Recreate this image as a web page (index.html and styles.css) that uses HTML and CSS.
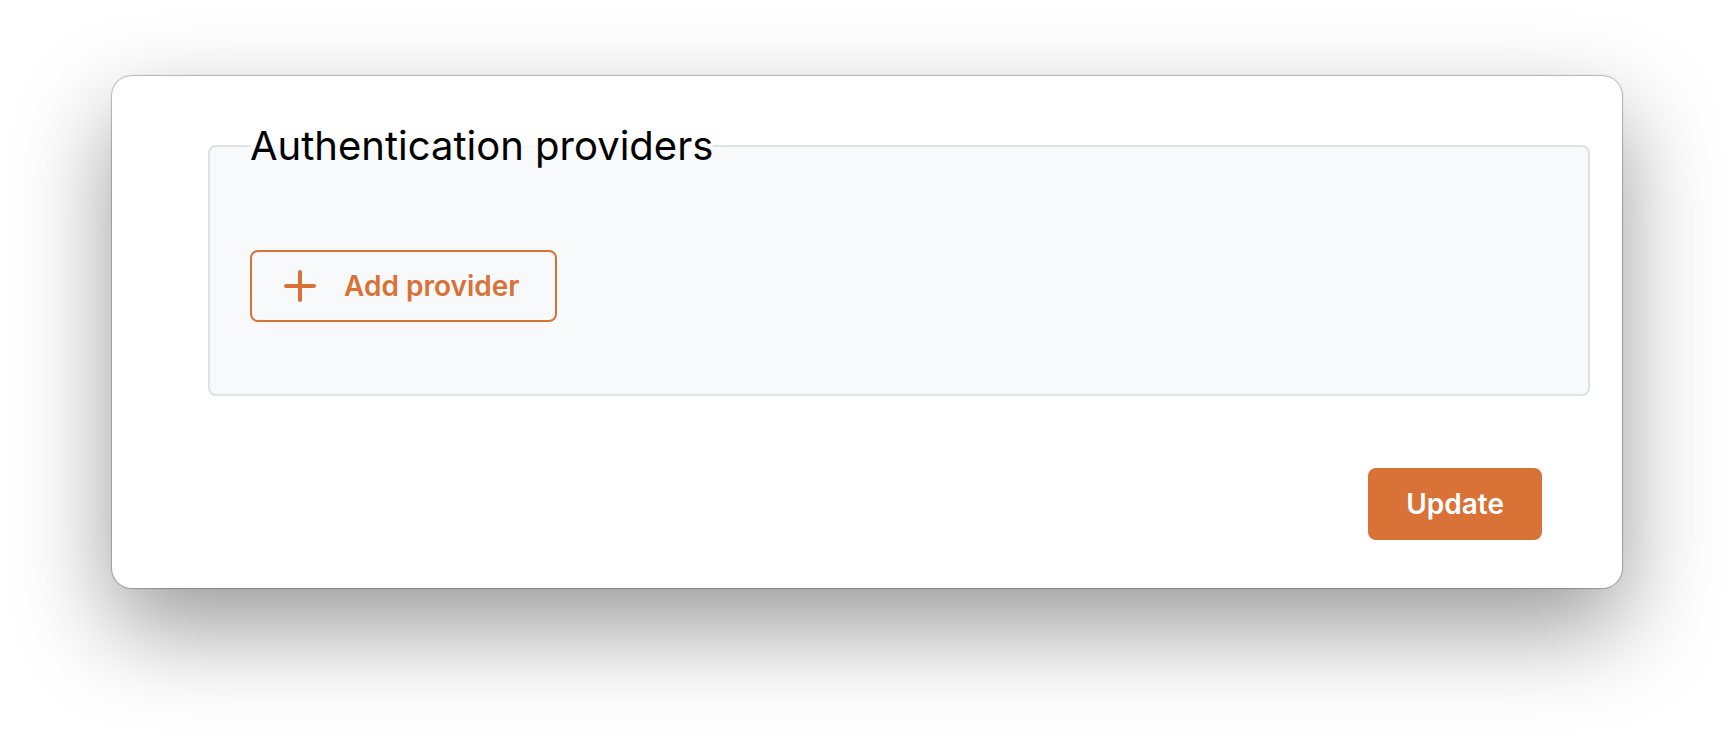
FILE: index.html
```
<!DOCTYPE html>
<html lang="en">
<head>
<meta charset="utf-8">
<title>Authentication providers</title>
<link rel="stylesheet" href="styles.css">
</head>
<body>
<main class="window">
  <form class="settings">
    <fieldset class="providers">
      <legend class="providers-title">Authentication providers</legend>
      <button class="button button-outline" type="button">
        <svg class="icon" viewBox="0 0 32 32" aria-hidden="true"><path d="M16 2v28M2 16h28"/></svg>
        Add provider
      </button>
    </fieldset>
    <div class="actions">
      <button class="button button-primary" type="submit">Update</button>
    </div>
  </form>
</main>
</body>
</html>
```
FILE: styles.css
```
* {
  box-sizing: border-box;
}

body {
  margin: 0;
  padding: 76px 112px 148px;
  background: #fff;
  font-family: Inter, sans-serif;
  color: #000;
}

.window {
  padding: 46px 32px 48px 96px;
  border-radius: 20px;
  background: #fff;
  box-shadow: 0 0 1px 1px rgba(0, 0, 0, 0.25), 0 40px 96px rgba(0, 0, 0, 0.4);
}

.providers {
  margin: 0;
  padding: 80px 40px 72px;
  border: 2px solid #dee2e6;
  border-radius: 8px;
  background: #f8f9fb;
}

.providers-title {
  padding: 0;
  font-size: 40px;
  line-height: 48px;
}

.button {
  display: inline-flex;
  align-items: center;
  height: 72px;
  padding: 0 36px;
  border: 2px solid #d97237;
  border-radius: 8px;
  font: 600 28px/40px Inter, sans-serif;
}

.button-outline {
  gap: 28px;
  padding-left: 32px;
  background: transparent;
  color: #d97237;
}

.button-primary {
  background: #d97237;
  color: #fff;
}

.icon {
  width: 32px;
  height: 32px;
  fill: none;
  stroke: currentColor;
  stroke-width: 4;
  stroke-linecap: round;
}

.actions {
  display: flex;
  justify-content: flex-end;
  padding: 72px 48px 0 0;
}
```
